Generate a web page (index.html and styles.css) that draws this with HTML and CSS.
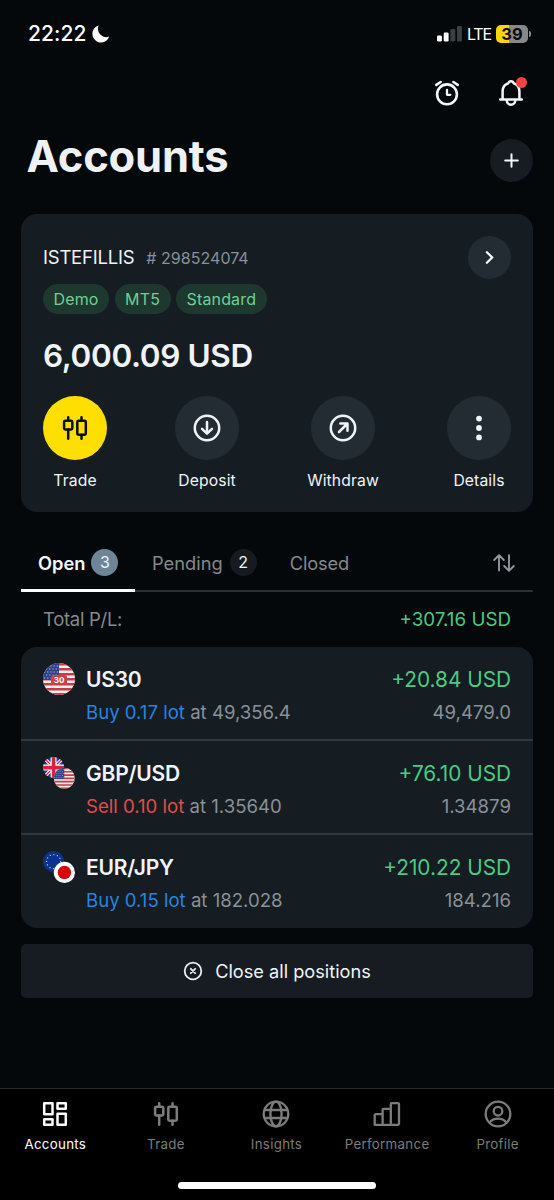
FILE: index.html
```
<!DOCTYPE html>
<html lang="en">
<head>
<meta charset="utf-8">
<title>Accounts</title>
<link rel="stylesheet" href="styles.css">
</head>
<body>
<svg width="0" height="0" class="defs" aria-hidden="true">
  <symbol id="candles" viewBox="0 0 26 26">
    <g fill="none" stroke="currentColor" stroke-width="2.500" stroke-linecap="round" stroke-linejoin="round">
      <rect x="2.100" y="5.800" width="8.200" height="8.600" rx="1.200"/>
      <path d="M6.200 2.200v3.600M6.200 14.400V23.800"/>
      <rect x="15.300" y="5.800" width="8.500" height="13.900" rx="1.200"/>
      <path d="M19.500 2.200v3.600M19.500 19.700v4.100"/>
    </g>
  </symbol>
  <symbol id="usa" viewBox="0 0 32 32">
    <rect width="32" height="32" fill="#f4eef0"/>
    <path d="M0 1.200h32M0 6.200h32M0 11.200h32M0 16.200h32M0 21.200h32M0 26.200h32M0 31.200h32" stroke="#c93a48" stroke-width="2.500"/>
    <rect width="16" height="17" fill="#2c4386"/>
    <path d="M1 3h15M3 6h13M1 9h15M3 12h13M1 15h15" stroke="#b9c3e0" stroke-width="1.200" stroke-dasharray="1.200 2"/>
  </symbol>
  <clipPath id="round"><circle cx="16" cy="16" r="16"/></clipPath>
</svg>

<header class="status">
  <div class="status-left">
    <span class="time">22:22</span>
    <svg class="moon" width="18" height="18" viewBox="0 0 18 18"><path fill="#fff" d="M6.700.6A8.600 8.600 0 1 0 17.200 11.500A8.200 8.200 0 0 1 6.700.6z"/></svg>
  </div>
  <div class="status-right">
    <svg width="26" height="17" viewBox="0 0 26 17">
      <rect x="0" y="10.500" width="4.900" height="6" rx="1.300" fill="#fff"/>
      <rect x="6.700" y="7.500" width="4.900" height="9" rx="1.300" fill="#fff"/>
      <rect x="13.400" y="4" width="4.900" height="12.500" rx="1.300" fill="#3c3f42"/>
      <rect x="20" y="1" width="4.900" height="15.500" rx="1.300" fill="#3c3f42"/>
    </svg>
    <span class="network">LTE</span>
    <span class="battery">39</span>
    <span class="battery-cap"></span>
  </div>
</header>

<div class="top-actions">
  <svg width="28" height="28" viewBox="0 0 28 28" fill="none" stroke="#f4f7fa" stroke-width="2.600" stroke-linecap="round" stroke-linejoin="round">
    <circle cx="14" cy="15.300" r="9.900"/><path d="M14 10.800v5h3.300" stroke-width="2.300"/><path d="M3.300 5.900L7.600 3M24.700 5.900L20.400 3"/>
  </svg>
  <div class="bell">
    <svg width="28" height="30" viewBox="0 0 28 30" fill="none" stroke="#f4f7fa" stroke-width="2.500" stroke-linecap="round" stroke-linejoin="round">
      <path d="M3.200 21.400h21.600M5.600 21.400V18.500V13.200a8.400 8.400 0 0 1 5.700-8 2.800 2.800 0 0 1 5.400 0 8.400 8.400 0 0 1 5.700 8v8.200"/><path d="M9.800 22.500a4.200 4.200 0 0 0 8.400 0"/>
    </svg>
    <span class="dot"></span>
  </div>
</div>

<div class="title-row">
  <h1>Accounts</h1>
  <button class="round-btn dark">
    <svg width="15" height="15" viewBox="0 0 15 15"><path d="M7.500 1.200v12.600M1.200 7.500h12.600" stroke="#f4f7fa" stroke-width="2" stroke-linecap="round"/></svg>
  </button>
</div>

<section class="account">
  <div class="account-head">
    <div class="account-id"><span class="name">ISTEFILLIS</span><span class="number"># 298524074</span></div>
    <button class="round-btn">
      <svg width="13" height="15" viewBox="0 0 13 15"><path d="M3.900 2.200l5.300 5.300-5.300 5.300" fill="none" stroke="#fff" stroke-width="2.200" stroke-linecap="round" stroke-linejoin="miter"/></svg>
    </button>
  </div>
  <div class="tags"><span>Demo</span><span>MT5</span><span>Standard</span></div>
  <div class="balance">6,000.09 USD</div>
  <div class="actions">
    <div class="action"><span class="disc primary"><svg width="26" height="26"><use href="#candles"/></svg></span><span>Trade</span></div>
    <div class="action"><span class="disc">
      <svg width="28" height="28" viewBox="0 0 28 28" fill="none" stroke="#f1f5f9" stroke-width="2.500" stroke-linecap="round" stroke-linejoin="round"><circle cx="14" cy="14" r="12.200"/><path d="M14 7.900v11.200M9 14.800l5 4.900 5-4.900"/></svg>
    </span><span>Deposit</span></div>
    <div class="action"><span class="disc">
      <svg width="28" height="28" viewBox="0 0 28 28" fill="none" stroke="#f1f5f9" stroke-width="2.500" stroke-linecap="round" stroke-linejoin="round"><circle cx="14" cy="14" r="12.200"/><path d="M10 18l8-8M11.300 9.500h7.200v7.200"/></svg>
    </span><span>Withdraw</span></div>
    <div class="action"><span class="disc">
      <svg width="28" height="28" viewBox="0 0 28 28" fill="#f1f5f9"><circle cx="14" cy="4.600" r="2.900"/><circle cx="14" cy="14" r="2.900"/><circle cx="14" cy="23.400" r="2.900"/></svg>
    </span><span>Details</span></div>
  </div>
</section>

<nav class="tabs">
  <div class="tab active"><span class="label">Open</span><span class="count">3</span></div>
  <div class="tab pending"><span class="label">Pending</span><span class="count">2</span></div>
  <div class="tab closed"><span class="label">Closed</span></div>
  <svg class="sort" width="22" height="20" viewBox="0 0 22 20" fill="none" stroke="#92979b" stroke-width="1.900" stroke-linecap="round" stroke-linejoin="round"><path d="M6 17.500V2.300M1.200 7L6 2.200 10.800 7M16 2.300v15.400M11.200 13L16 17.800 20.800 13"/></svg>
</nav>

<div class="total"><span class="total-label">Total P/L:</span><span class="gain">+307.16 USD</span></div>

<section class="positions">
  <div class="position">
    <svg class="flag" width="32" height="32" viewBox="0 0 32 32">
      <g clip-path="url(#round)"><use href="#usa"/></g>
      <rect x="8" y="12" width="16" height="10" rx="2.500" fill="#cf3f49"/>
      <text class="flag-text" x="16" y="20" text-anchor="middle">30</text>
    </svg>
    <div class="main"><div class="symbol">US30</div><div class="order"><span class="buy">Buy 0.17 lot</span> at 49,356.4</div></div>
    <div class="side"><div class="profit">+20.84 USD</div><div class="price">49,479.0</div></div>
  </div>
  <div class="position">
    <svg class="flag" width="32" height="32" viewBox="0 0 32 32">
      <g transform="scale(.66)"><g clip-path="url(#round)">
        <rect width="32" height="32" fill="#1d3b8b"/>
        <path d="M0 0l32 32M32 0L0 32" stroke="#fff" stroke-width="5"/>
        <path d="M0 0l32 32M32 0L0 32" stroke="#d5203f" stroke-width="2"/>
        <path d="M16 0v32M0 16h32" stroke="#fff" stroke-width="9"/>
        <path d="M16 0v32M0 16h32" stroke="#d5203f" stroke-width="5.500"/>
      </g></g>
      <g transform="translate(10.700 10.700) scale(.66)"><g clip-path="url(#round)"><use href="#usa"/></g></g>
    </svg>
    <div class="main"><div class="symbol">GBP/USD</div><div class="order"><span class="sell">Sell 0.10 lot</span> at 1.35640</div></div>
    <div class="side"><div class="profit">+76.10 USD</div><div class="price">1.34879</div></div>
  </div>
  <div class="position">
    <svg class="flag" width="32" height="32" viewBox="0 0 32 32">
      <circle cx="10.600" cy="10.600" r="10.600" fill="#0b3191"/>
      <circle cx="10.600" cy="10.600" r="7" fill="none" stroke="#d6cf6a" stroke-width="1.300" stroke-linecap="round" stroke-dasharray=".1 3.565"/>
      <circle cx="21.400" cy="21.400" r="10.600" fill="#fff"/><circle cx="21.400" cy="21.400" r="6.700" fill="#d80407"/>
    </svg>
    <div class="main"><div class="symbol">EUR/JPY</div><div class="order"><span class="buy">Buy 0.15 lot</span> at 182.028</div></div>
    <div class="side"><div class="profit">+210.22 USD</div><div class="price">184.216</div></div>
  </div>
</section>

<button class="close-all">
  <svg width="20" height="20" viewBox="0 0 20 20" fill="none" stroke="#e8edf2" stroke-width="1.800" stroke-linecap="round"><circle cx="10" cy="10" r="8.300"/><path d="M7.800 7.800l4.400 4.400M12.200 7.800l-4.400 4.400"/></svg>
  <span>Close all positions</span>
</button>

<footer class="nav">
  <div class="nav-items">
    <div class="nav-item active">
      <svg width="28" height="28" viewBox="0 0 28 28" fill="none" stroke="currentColor" stroke-width="2.500" stroke-linejoin="round"><rect x="3.200" y="3.200" width="8.300" height="11"/><rect x="16.500" y="3.200" width="8.300" height="5.600"/><rect x="3.200" y="19.200" width="8.300" height="5.600"/><rect x="16.500" y="13.800" width="8.300" height="11"/></svg>
      <span>Accounts</span>
    </div>
    <div class="nav-item"><svg width="28" height="28"><use href="#candles" x="1" y="1" width="26" height="26"/></svg><span>Trade</span></div>
    <div class="nav-item">
      <svg width="28" height="28" viewBox="0 0 28 28" fill="none" stroke="currentColor" stroke-width="2.300"><circle cx="14" cy="14" r="12.300"/><ellipse cx="14" cy="14" rx="5.600" ry="12.300"/><path d="M2.500 10h23M2.500 18h23"/></svg>
      <span>Insights</span>
    </div>
    <div class="nav-item">
      <svg width="28" height="28" viewBox="0 0 28 28" fill="none" stroke="currentColor" stroke-width="2.300" stroke-linejoin="round"><path d="M1.700 24.800V15.200a1 1 0 0 1 1-1h6.900v10.600zM9.600 24.800V9.900a1 1 0 0 1 1-1h7.200v15.900zM17.800 24.800V4.200a1 1 0 0 1 1-1h6.200a1 1 0 0 1 1 1v19.600a1 1 0 0 1-1 1zM1.700 24.800h23"/></svg>
      <span>Performance</span>
    </div>
    <div class="nav-item">
      <svg width="28" height="28" viewBox="0 0 28 28" fill="none" stroke="currentColor" stroke-width="2.300"><circle cx="14" cy="14" r="12.300"/><circle cx="14" cy="11.200" r="4.300"/><path d="M5.600 22.600c2-2.700 5-3.900 8.400-3.900s6.400 1.200 8.400 3.900"/></svg>
      <span>Profile</span>
    </div>
  </div>
  <div class="home-bar"></div>
</footer>
</body>
</html>
```
FILE: styles.css
```
* { box-sizing: border-box; }
body {
  margin: 0;
  width: 554px;
  height: 1200px;
  display: flex;
  flex-direction: column;
  overflow: hidden;
  background: #04080b;
  color: #f0f4f8;
  font-family: Inter, "Liberation Sans", sans-serif;
}
svg { display: block; flex: none; }
.defs { position: absolute; }
button { border: 0; padding: 0; margin: 0; color: inherit; font: inherit; }

.status { height: 67px; padding: 0 23px 0 28px; display: flex; justify-content: space-between; align-items: center; }
.status-left { display: flex; align-items: center; gap: 5px; }
.time { font-size: 21px; font-weight: 500; color: #fff; letter-spacing: .1px; }
.status-right { display: flex; align-items: center; }
.network { margin-left: 4px; width: 25px; font-size: 16px; letter-spacing: -1.200px; color: #fff; }
.battery { margin-left: 4px; width: 32px; height: 18px; border-radius: 5px; background: linear-gradient(90deg, #fcd60a 40%, #88888b 40%); color: #0a0a0a; font-size: 16.500px; font-weight: 700; line-height: 18px; text-align: center; }
.battery-cap { width: 2px; height: 6px; margin-left: 1px; border-radius: 0 2px 2px 0; background: #88888b; }

.top-actions { height: 52px; padding: 0 29px; display: flex; justify-content: flex-end; align-items: center; gap: 36px; }
.bell { position: relative; }
.dot { position: absolute; top: -1px; right: -2px; width: 11px; height: 11px; border-radius: 50%; background: #ee4540; }

.title-row { height: 95px; padding: 20px 21.500px 0 26.500px; display: flex; justify-content: space-between; }
h1 { margin: -7px 0 0; font-size: 43.500px; line-height: 48px; font-weight: 700; letter-spacing: -.2px; color: #eef2f5; }
.round-btn { width: 43px; height: 43px; border-radius: 50%; display: grid; place-items: center; background: #222c32; }
.round-btn.dark { background: #171c22; }

.account { margin: 0 21px; height: 298px; padding: 22px; border-radius: 16px; background: #151d22; }
.account-head { display: flex; justify-content: space-between; align-items: center; height: 43px; }
.account-id { display: flex; align-items: baseline; gap: 12px; margin-top: -2px; }
.name { font-size: 18.500px; letter-spacing: -.22px; }
.number { font-size: 16px; color: #8a9097; letter-spacing: .03px; }
.tags { margin-top: 5px; display: flex; gap: 5.500px; }
.tags span { height: 30px; padding: 0 10.500px; border-radius: 15px; background: #1e382f; color: #6fcf97; font-size: 16px; line-height: 30px; letter-spacing: .15px; }
.balance { margin-top: 22px; font-size: 31.500px; font-weight: 600; line-height: 40px; letter-spacing: -.37px; }
.actions { margin-top: 20px; display: flex; justify-content: space-between; }
.action { display: flex; flex-direction: column; align-items: center; font-size: 15.700px; line-height: 20px; letter-spacing: .12px; }
.disc { width: 64px; height: 64px; margin-bottom: 11px; border-radius: 50%; display: grid; place-items: center; background: #222c32; }
.disc.primary { background: #ffde02; color: #0b0d0e; }

.tabs { margin: 22px 21px 0; height: 58px; display: flex; border-bottom: 2px solid #2a2f33; font-size: 18.300px; color: #84898d; }
.tab { height: 58px; display: flex; align-items: center; padding-bottom: 1px; }
.tab.active { width: 114px; padding-left: 17px; border-bottom: 3px solid #fff; padding-top: 2px; padding-bottom: 0; color: #f4f7fa; font-weight: 600; }
.count { width: 27px; height: 27px; border-radius: 50%; background: #171b20; color: #f0f4f8; font-size: 16px; font-weight: 400; line-height: 27px; text-align: center; }
.active .count { background: #6d8596; margin-left: 6px; }
.pending { margin-left: 17px; }
.pending .count { margin-left: 7px; }
.closed { margin-left: 33px; letter-spacing: -.15px; }
.sort { margin: 19px 18px 0 auto; }

.total { height: 55px; padding: 0 43px; display: flex; justify-content: space-between; align-items: center; font-size: 18.800px; color: #84898d; }
.total-label { font-size: 18.500px; line-height: 24px; margin-top: -1px; letter-spacing: -.3px; }
.gain, .profit { color: #4bcb83; }

.positions { margin: 0 21px; border-radius: 16px; background: #151d22; }
.position { height: 94px; padding: 16px 22px 0; display: flex; border-bottom: 2px solid #2f383d; }
.position:last-child { height: 93px; border-bottom: 0; }
.main { margin-left: 11px; flex: 1; }
.side { text-align: right; }
.symbol, .profit { font-size: 20.800px; line-height: 33px; }
.symbol { font-size: 21px; font-weight: 600; letter-spacing: -.2px; }
.order, .price { font-size: 18.600px; line-height: 33px; color: #8a9097; }
.buy { color: #2784e0; }
.sell { color: #e24c4b; }
.flag-text { font-size: 8px; font-weight: 700; fill: #fff; }

.close-all { margin: 16px 21px 0; height: 54px; border-radius: 5px; background: #171c22; display: flex; align-items: center; justify-content: center; gap: 12px; font-size: 18.200px; }

.nav { margin-top: auto; height: 112px; border-top: 1px solid #26282a; background: #000; display: flex; flex-direction: column; align-items: center; }
.nav-items { width: 100%; height: 93px; padding: 11px 1px 0 0; display: grid; grid-template-columns: repeat(5, 1fr); }
.nav-item { display: flex; flex-direction: column; align-items: center; gap: 8px; color: #7c7c7c; font-size: 13.300px; line-height: 17px; letter-spacing: .3px; }
.nav-item.active { color: #fff; }
.home-bar { width: 198px; height: 7px; border-radius: 4px; background: #fff; }
```
